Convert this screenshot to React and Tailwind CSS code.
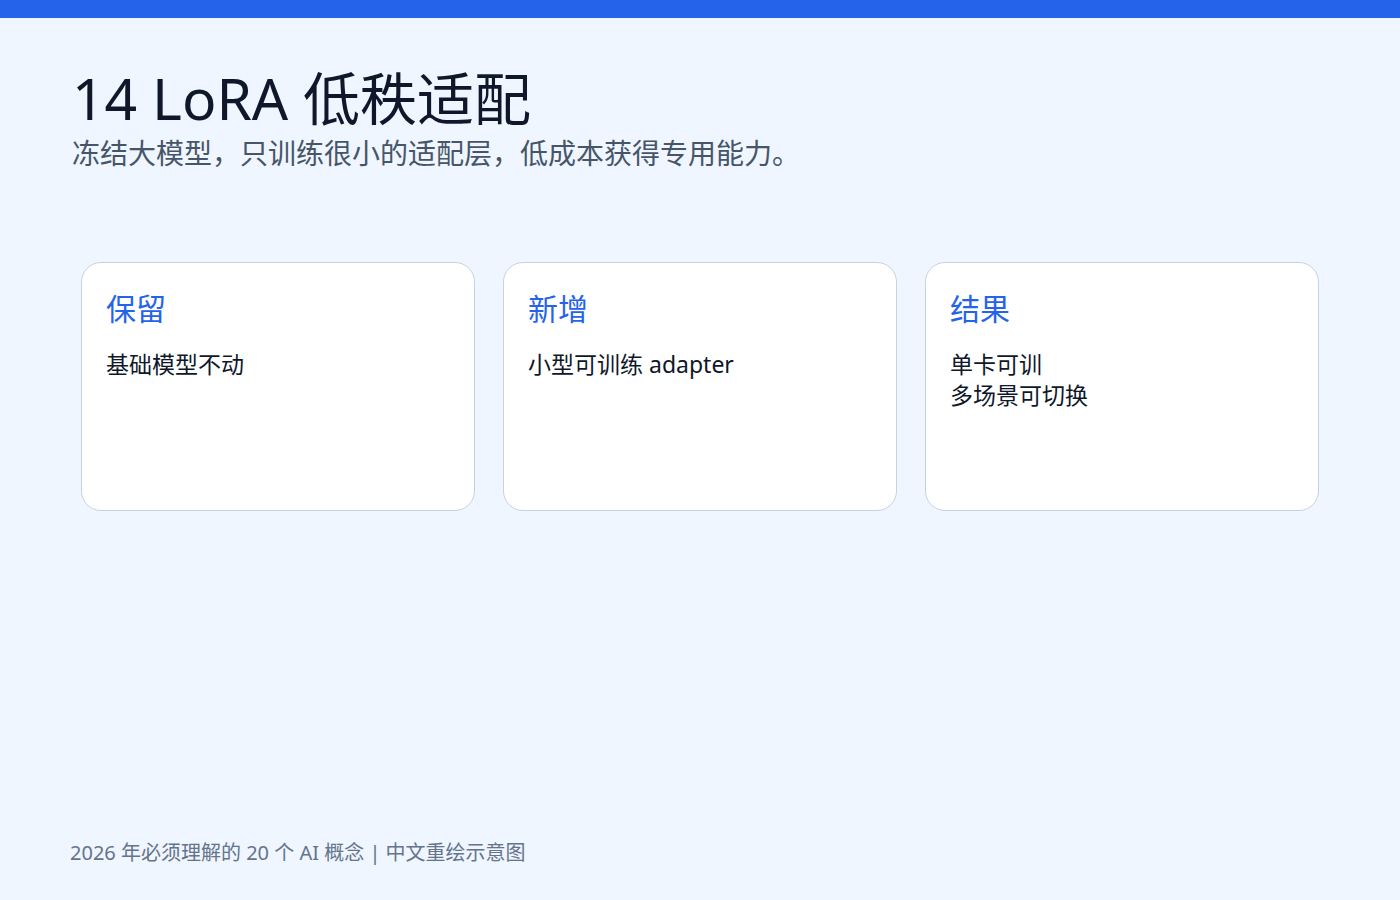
export default function App() {
  const cards = [
    { t: "保留", b: ["基础模型不动"] },
    { t: "新增", b: ["小型可训练 adapter"] },
    { t: "结果", b: ["单卡可训", "多场景可切换"] },
  ];
  return (
    <div className="w-[1400px] h-[900px] bg-[#eff6ff] flex flex-col" style={{ fontFamily: '"Noto Sans", "Noto Sans CJK SC", sans-serif' }}>
      <div className="h-[18px] bg-[#2563eb]" />
      <div className="px-[72px] pt-[44px]">
        <h1 className="text-[57px] leading-[72px] text-[#0f172a]">14 LoRA 低秩适配</h1>
        <p className="text-[28px] leading-[34px] text-[#475569] mt-[2px]">冻结大模型，只训练很小的适配层，低成本获得专用能力。</p>
      </div>
      <div className="flex gap-[28px] ml-[81px] mt-[92px]">
        {cards.map((c) => (
          <div key={c.t} className="w-[394px] h-[249px] bg-white border border-[#c7d2e0] rounded-[20px] px-[24px] pt-[26px]">
            <div className="text-[30px] leading-[40px] text-[#2563eb]">{c.t}</div>
            <div className="mt-[20px] text-[23px] leading-[31px] text-[#0f172a]">
              {c.b.map((l) => <div key={l}>{l}</div>)}
            </div>
          </div>
        ))}
      </div>
      <div className="mt-auto mb-[32px] ml-[70px] text-[20px] text-[#64748b]">2026 年必须理解的 20 个 AI 概念 | 中文重绘示意图</div>
    </div>
  );
}
